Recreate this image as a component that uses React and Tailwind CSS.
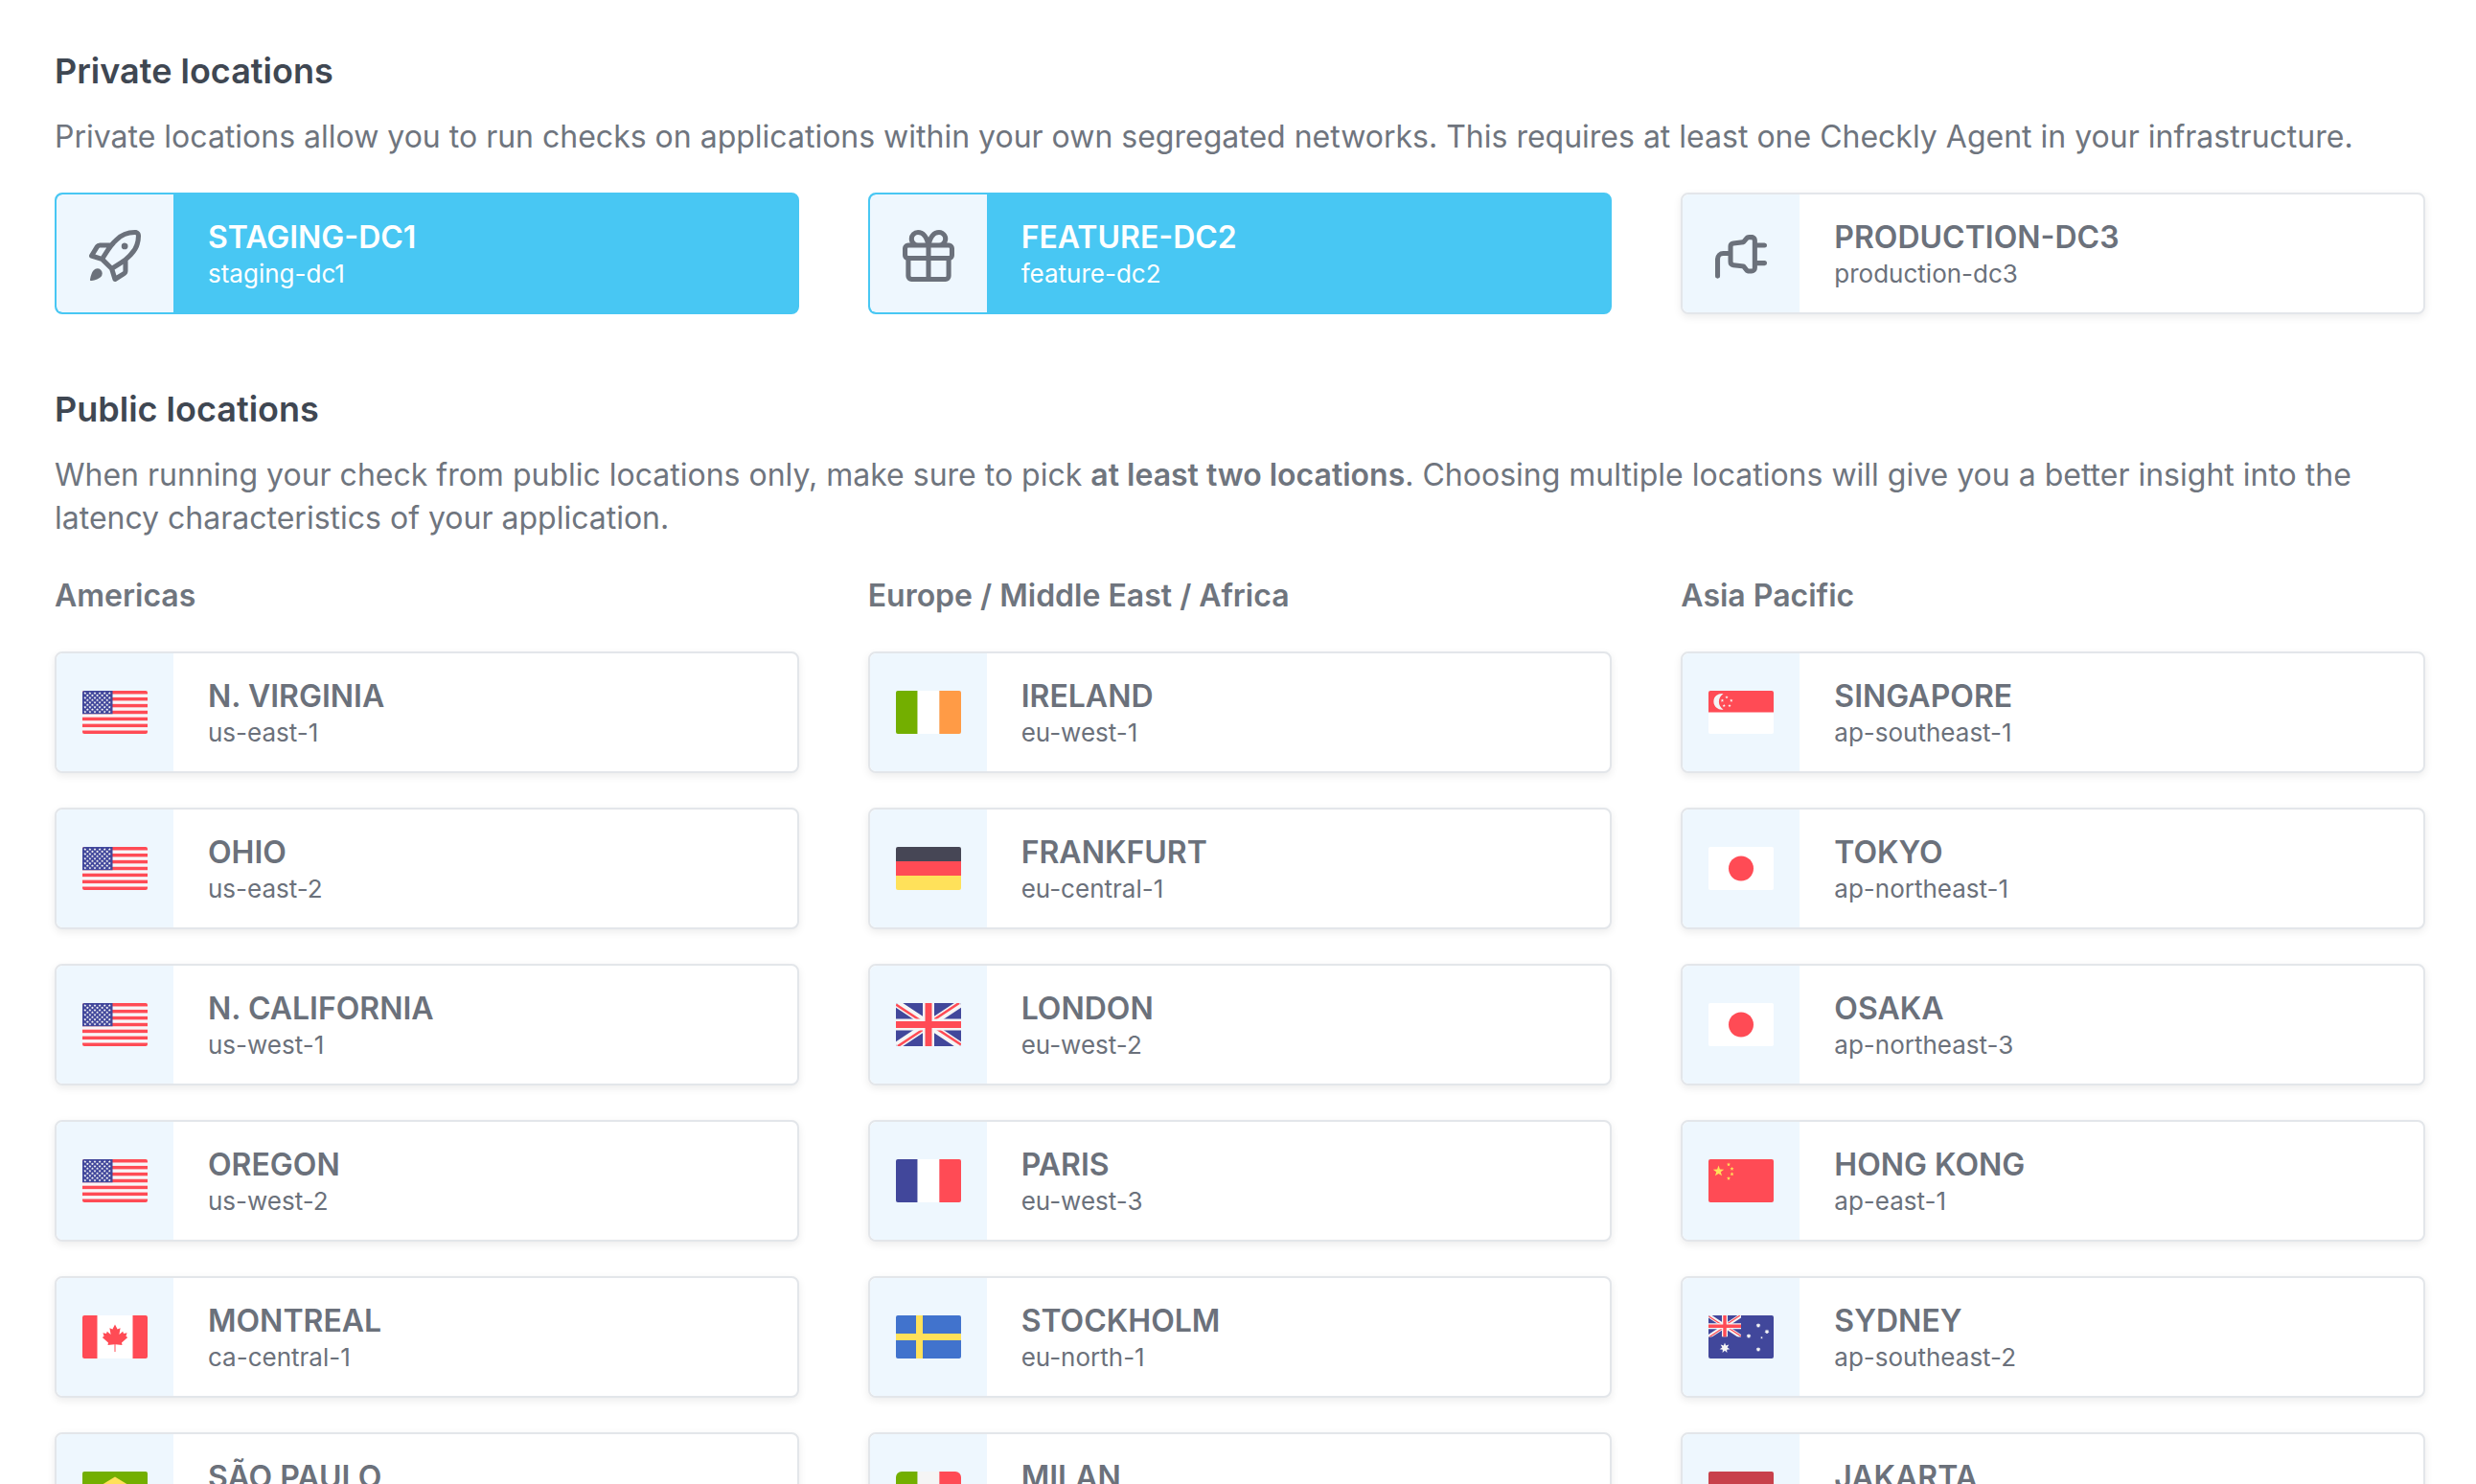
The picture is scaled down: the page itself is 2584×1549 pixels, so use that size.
const star = (cx, cy, r, points = 5, inner = 0.4) =>
  Array.from({ length: points * 2 }, (_, i) => {
    const a = (Math.PI * i) / points - Math.PI / 2;
    const d = i % 2 ? r * inner : r;
    return `${(cx + d * Math.cos(a)).toFixed(2)},${(cy + d * Math.sin(a)).toFixed(2)}`;
  }).join(" ");

const RED = "#ff4b55";
const BLUE = "#41479b";
const WHITE = "#ffffff";
const YELLOW = "#ffe15a";

const ICONS = {
  rocket:
    "M14.064 0h.186C15.216 0 16 .784 16 1.75v.186a8.752 8.752 0 0 1-2.564 6.186l-.458.459c-.314.314-.641.616-.979.904v3.207c0 .608-.315 1.172-.833 1.49l-2.774 1.707a.749.749 0 0 1-1.11-.418l-.954-3.102a1.214 1.214 0 0 1-.145-.125L3.754 9.816a1.218 1.218 0 0 1-.124-.145L.528 8.717a.749.749 0 0 1-.418-1.11l1.71-2.774A1.748 1.748 0 0 1 3.31 4h3.204c.288-.338.59-.665.904-.979l.459-.458A8.749 8.749 0 0 1 14.064 0ZM8.938 3.623h-.002l-.458.458c-.76.76-1.437 1.598-2.02 2.5l-1.5 2.317 2.143 2.143 2.317-1.5c.902-.583 1.74-1.26 2.499-2.02l.459-.458a7.25 7.25 0 0 0 2.123-5.127V1.75a.25.25 0 0 0-.25-.25h-.186a7.249 7.249 0 0 0-5.125 2.123ZM3.56 14.56c-.732.732-2.334 1.045-3.005 1.148a.234.234 0 0 1-.201-.064.234.234 0 0 1-.064-.201c.103-.671.416-2.273 1.15-3.003a1.502 1.502 0 1 1 2.12 2.12Zm6.94-3.935c-.088.06-.177.118-.266.175l-2.35 1.521.548 1.783 1.949-1.2a.25.25 0 0 0 .119-.213ZM3.678 8.116 5.2 5.766c.058-.09.117-.178.176-.266H3.309a.25.25 0 0 0-.213.119l-1.2 1.95ZM12 5a1 1 0 1 1-2 0 1 1 0 0 1 2 0Z",
  gift:
    "M2 2.75A2.75 2.75 0 0 1 4.75 0c.983 0 1.873.42 2.57 1.232.268.318.497.668.68 1.042.183-.375.411-.725.68-1.044C9.376.42 10.266 0 11.25 0a2.75 2.75 0 0 1 2.45 4h.55c.966 0 1.75.784 1.75 1.75v2c0 .698-.409 1.301-1 1.582v4.918A1.75 1.75 0 0 1 13.25 16H2.75A1.75 1.75 0 0 1 1 14.25V9.332C.409 9.05 0 8.448 0 7.75v-2C0 4.784.784 4 1.75 4h.55c-.192-.375-.3-.8-.3-1.25ZM7.25 9.5H2.5v4.75c0 .138.112.25.25.25h4.5Zm1.5 0v5h4.5a.25.25 0 0 0 .25-.25V9.5Zm0-4V8h5.5a.25.25 0 0 0 .25-.25v-2a.25.25 0 0 0-.25-.25Zm-7 0a.25.25 0 0 0-.25.25v2c0 .138.112.25.25.25h5.5V5.5h-5.5Zm3-4a1.25 1.25 0 0 0 0 2.5h2.309c-.233-.818-.542-1.401-.878-1.793-.43-.502-.915-.707-1.431-.707ZM8.941 4h2.309a1.25 1.25 0 0 0 0-2.5c-.516 0-1 .205-1.43.707-.337.392-.646.975-.879 1.793Z",
  plug:
    "M4 8H2.5a1 1 0 0 0-1 1v5.25a.75.75 0 0 1-1.5 0V9a2.5 2.5 0 0 1 2.5-2.5H4V5.133a1.75 1.75 0 0 1 1.533-1.737l2.831-.353.76-.913c.332-.4.825-.63 1.344-.63h.782c.966 0 1.75.784 1.75 1.75V4h2.25a.75.75 0 0 1 0 1.5H13v4h2.25a.75.75 0 0 1 0 1.5H13v.75a1.75 1.75 0 0 1-1.75 1.75h-.782c-.519 0-1.012-.23-1.344-.63l-.761-.912-2.83-.354A1.75 1.75 0 0 1 4 9.867Zm6.276-4.91-.95 1.14a.753.753 0 0 1-.483.265l-3.124.39a.25.25 0 0 0-.219.248v4.734c0 .126.094.233.219.249l3.124.39a.752.752 0 0 1 .483.264l.95 1.14a.25.25 0 0 0 .192.09h.782a.25.25 0 0 0 .25-.25v-8.5a.25.25 0 0 0-.25-.25h-.782a.25.25 0 0 0-.192.09Z",
};

function Icon({ name }) {
  return (
    <span className="pt-1">
      <svg viewBox="0 0 16 16" fill="currentColor" className="size-[54px]" aria-hidden="true">
        <path d={ICONS[name]} />
      </svg>
    </span>
  );
}

function Vertical({ colors }) {
  return colors.map((c, i) => <rect key={i} x={(i * 68) / 3} width={68 / 3} height="45" fill={c} />);
}

function Horizontal({ colors }) {
  const h = 45 / colors.length;
  return colors.map((c, i) => <rect key={i} y={i * h} width="68" height={h} fill={c} />);
}

function UnionJack() {
  return (
    <>
      <rect width="68" height="45" fill={BLUE} />
      <path d="M0 0L68 45M68 0L0 45" stroke="#f5f5f5" strokeWidth="8" />
      <path d="M0 1.5L29 20.5M68 43.5L39 24.5M66 0L38 18.5M2 45L30 26.5" stroke={RED} strokeWidth="2.6" />
      <path d="M34 0V45M0 22.5H68" stroke="#f5f5f5" strokeWidth="12" />
      <path d="M34 0V45M0 22.5H68" stroke={RED} strokeWidth="7" />
    </>
  );
}

function UsFlag() {
  const stars = [];
  for (let r = 0; r < 9; r++) {
    const n = r % 2 ? 5 : 6;
    for (let c = 0; c < n; c++) stars.push([2.8 + c * 5.1 + (r % 2 ? 2.55 : 0), 2.5 + r * 2.45]);
  }
  return (
    <>
      <rect width="68" height="45" fill="#f9f6f8" />
      {[0, 2, 4, 6, 8, 10, 12].map((i) => (
        <rect key={i} y={(i * 45) / 13} width="68" height={45 / 13} fill={RED} />
      ))}
      <rect width="31.5" height="24.23" fill={BLUE} />
      {stars.map(([x, y], i) => (
        <polygon key={i} points={star(x, y, 1.5, 5, 0.5)} fill="#f5f5f5" />
      ))}
    </>
  );
}

const FLAGS = {
  us: <UsFlag />,
  ca: (
    <>
      <rect width="68" height="45" fill={WHITE} />
      <rect width="15.5" height="45" fill={RED} />
      <rect x="52.5" width="15.5" height="45" fill={RED} />
      <path
        fill={RED}
        d="M34 9.5L36.6 14.6L39.6 13.2L38.4 20L42.2 16.8L43 18.9L46.6 18.3L45.4 21.8L47.2 22.9L41 28.4L41.5 31L34.5 30.3V38H33.5V30.3L26.5 31L27 28.4L20.8 22.9L22.6 21.8L21.4 18.3L25 18.9L25.8 16.8L29.6 20L28.4 13.2L31.4 14.6Z"
      />
    </>
  ),
  br: (
    <>
      <rect width="68" height="45" fill="#73af00" />
      <path d="M34 5.5L62 22.5L34 39.5L6 22.5Z" fill={YELLOW} />
      <circle cx="34" cy="22.5" r="8.5" fill={BLUE} />
    </>
  ),
  ie: <Vertical colors={["#73af00", WHITE, "#ff9b46"]} />,
  de: <Horizontal colors={["#464655", RED, YELLOW]} />,
  gb: <UnionJack />,
  fr: <Vertical colors={[BLUE, WHITE, RED]} />,
  se: (
    <>
      <rect width="68" height="45" fill="#4173cd" />
      <path d="M24.5 0V45M0 22.5H68" stroke={YELLOW} strokeWidth="7" />
    </>
  ),
  it: <Vertical colors={["#73af00", "#f5f5f5", RED]} />,
  sg: (
    <>
      <rect width="68" height="45" fill={WHITE} />
      <rect width="68" height="22.5" fill={RED} />
      <path d="M15.5 3.2A8.3 8.3 0 1 0 15.5 19.4A9.4 9.4 0 0 1 15.5 3.2Z" fill="#f5f5f5" />
      {[[19, 6.8], [23.8, 10.2], [22, 15.6], [16.2, 15.6], [14.4, 10.2]].map(([x, y]) => (
        <polygon key={x} points={star(x, y, 1.8)} fill="#f5f5f5" />
      ))}
    </>
  ),
  jp: (
    <>
      <rect width="68" height="45" fill={WHITE} />
      <circle cx="34" cy="22.5" r="13" fill={RED} />
    </>
  ),
  cn: (
    <>
      <rect width="68" height="45" fill={RED} />
      <polygon points={star(10.5, 12.5, 6)} fill={YELLOW} />
      {[[21, 5.5], [24.5, 10], [24.5, 15.5], [21, 20]].map(([x, y]) => (
        <polygon key={y} points={star(x, y, 2.2)} fill={YELLOW} />
      ))}
    </>
  ),
  au: (
    <>
      <rect width="68" height="45" fill={BLUE} />
      <svg width="34" height="22.5" viewBox="0 0 68 45" preserveAspectRatio="none">
        <UnionJack />
      </svg>
      <polygon points={star(17, 34, 5.5, 7, 0.5)} fill="#f5f5f5" />
      {[[52, 10.5], [61, 17], [42, 21.5], [52, 35.5]].map(([x, y]) => (
        <polygon key={y} points={star(x, y, 2.6, 7, 0.55)} fill="#f5f5f5" />
      ))}
      <polygon points={star(55.5, 23.3, 1.5)} fill="#f5f5f5" />
    </>
  ),
  id: <Horizontal colors={["#c8414b", "#f5f5f5"]} />,
};

const FLAG_ROUNDING = { it: "rounded-md" };

function Flag({ code }) {
  return (
    <svg
      viewBox="0 0 68 45"
      className={`h-[45px] w-[68px] ${FLAG_ROUNDING[code] ?? "rounded-[2px]"}`}
      aria-hidden="true"
    >
      {FLAGS[code]}
    </svg>
  );
}

const PRIVATE = [
  { name: "STAGING-DC1", slug: "staging-dc1", icon: "rocket", selected: true },
  { name: "FEATURE-DC2", slug: "feature-dc2", icon: "gift", selected: true },
  { name: "PRODUCTION-DC3", slug: "production-dc3", icon: "plug", selected: false },
];

const REGIONS = [
  {
    title: "Americas",
    items: [
      ["us", "N. VIRGINIA", "us-east-1"],
      ["us", "OHIO", "us-east-2"],
      ["us", "N. CALIFORNIA", "us-west-1"],
      ["us", "OREGON", "us-west-2"],
      ["ca", "MONTREAL", "ca-central-1"],
      ["br", "SÃO PAULO", "sa-east-1"],
    ],
  },
  {
    title: "Europe / Middle East / Africa",
    items: [
      ["ie", "IRELAND", "eu-west-1"],
      ["de", "FRANKFURT", "eu-central-1"],
      ["gb", "LONDON", "eu-west-2"],
      ["fr", "PARIS", "eu-west-3"],
      ["se", "STOCKHOLM", "eu-north-1"],
      ["it", "MILAN", "eu-south-1"],
    ],
  },
  {
    title: "Asia Pacific",
    items: [
      ["sg", "SINGAPORE", "ap-southeast-1"],
      ["jp", "TOKYO", "ap-northeast-1"],
      ["jp", "OSAKA", "ap-northeast-3"],
      ["cn", "HONG KONG", "ap-east-1"],
      ["au", "SYDNEY", "ap-southeast-2"],
      ["id", "JAKARTA", "ap-southeast-3"],
    ],
  },
];

function LocationCard({ name, slug, selected = false, children }) {
  return (
    <button
      type="button"
      aria-pressed={selected}
      className={`flex h-[127px] w-full overflow-hidden rounded-lg border-2 text-left ${
        selected
          ? "border-[#48c7f3] bg-[#48c7f3] text-white"
          : "border-[#e3e6ea] bg-white text-[#6b717b] shadow-[0_3px_8px_rgba(0,0,0,0.08)]"
      }`}
    >
      <span className="flex h-full w-[122px] shrink-0 items-center justify-center rounded-l-md bg-[#eef7fe] text-[#6b717b]">
        {children}
      </span>
      <span className="flex h-full flex-col justify-center pl-9">
        <span className="text-[32px] leading-[42px] font-semibold">{name}</span>
        <span className="text-[26px] leading-[34px]">{slug}</span>
      </span>
    </button>
  );
}

export default function App() {
  return (
    <main className="h-screen overflow-hidden bg-white pt-12 pr-[53px] pl-[57px] font-['Inter',sans-serif] text-[#6f757e]">
      <section>
        <h2 className="text-[36px] leading-[52px] font-semibold text-[#3f4752]">Private locations</h2>
        <p className="mt-5 text-[32px] leading-[45px]">
          Private locations allow you to run checks on applications within your own segregated networks. This
          requires at least one Checkly Agent in your infrastructure.
        </p>
        <div className="mt-9 grid grid-cols-3 gap-x-[72px]">
          {PRIVATE.map(({ name, slug, icon, selected }) => (
            <LocationCard key={slug} name={name} slug={slug} selected={selected}>
              <Icon name={icon} />
            </LocationCard>
          ))}
        </div>
      </section>
      <section className="mt-[73px]">
        <h2 className="text-[36px] leading-[52px] font-semibold text-[#3f4752]">Public locations</h2>
        <p className="mt-5 text-[32px] leading-[45px]">
          When running your check from public locations only, make sure to pick{" "}
          <strong className="font-semibold">at least two locations</strong>. Choosing multiple locations will give
          you a better insight into the latency characteristics of your application.
        </p>
        <div className="mt-9 grid grid-cols-3 gap-x-[72px]">
          {REGIONS.map((region) => (
            <section key={region.title}>
              <h3 className="text-[32px] leading-[45px] font-semibold">{region.title}</h3>
              <div className="mt-9 flex flex-col gap-9">
                {region.items.map(([flag, name, slug]) => (
                  <LocationCard key={slug} name={name} slug={slug}>
                    <Flag code={flag} />
                  </LocationCard>
                ))}
              </div>
            </section>
          ))}
        </div>
      </section>
    </main>
  );
}
